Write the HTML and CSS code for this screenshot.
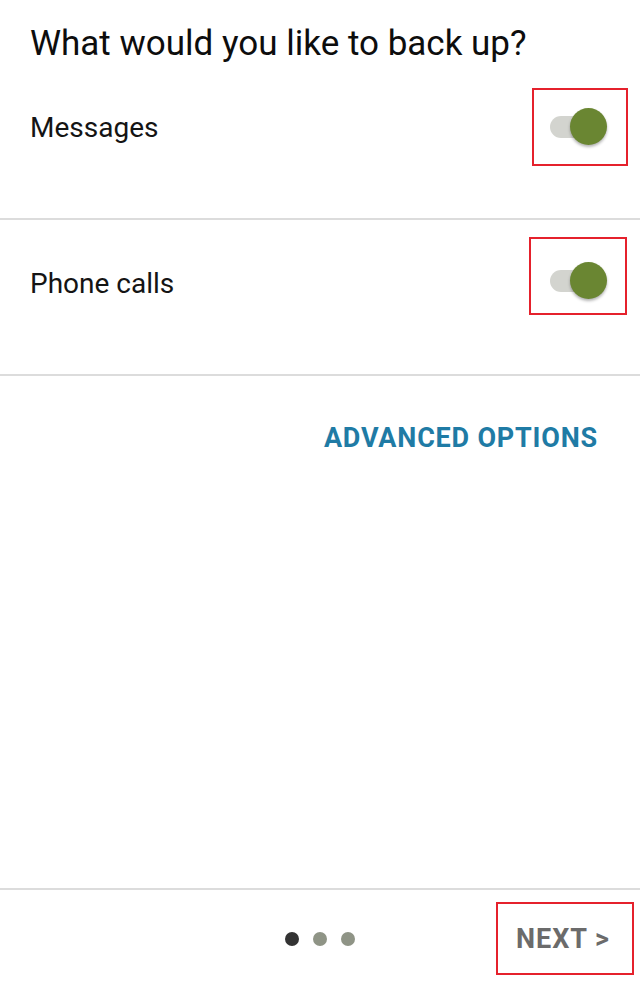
FILE: index.html
```html
<!DOCTYPE html>
<html lang="en">
<head>
<meta charset="utf-8">
<title>Backup</title>
<link rel="stylesheet" href="styles.css">
</head>
<body>
<div class="screen">
  <h1 class="title">What would you like to back up?</h1>
  <div class="row">
    <span class="row-label">Messages</span>
    <div class="annot annot--a">
      <div class="switch"><span class="track"></span><span class="thumb"></span></div>
    </div>
  </div>
  <div class="row">
    <span class="row-label">Phone calls</span>
    <div class="annot annot--b">
      <div class="switch"><span class="track"></span><span class="thumb"></span></div>
    </div>
  </div>
  <div class="advanced">ADVANCED OPTIONS</div>
  <div class="spacer"></div>
  <div class="footer">
    <div class="dots">
      <span class="dot dot--active"></span>
      <span class="dot"></span>
      <span class="dot"></span>
    </div>
    <div class="next-box"><span class="next">NEXT &gt;</span></div>
  </div>
</div>
</body>
</html>
```

FILE: styles.css
```css
html, body {
  margin: 0;
  padding: 0;
  background: #ffffff;
}
body {
  font-family: Roboto, "Liberation Sans", sans-serif;
  color: #111111;
}
.screen {
  width: 640px;
  height: 987px;
  display: flex;
  flex-direction: column;
  overflow: hidden;
}
.title {
  margin: 0;
  padding: 23px 0 0 30px;
  font-size: 35px;
  line-height: 41px;
  font-weight: 400;
  color: #0d0d0d;
}
.row {
  height: 154px;
  flex: none;
  border-bottom: 2px solid #dcdcdc;
  display: flex;
  align-items: flex-start;
  justify-content: space-between;
}
.row-label {
  margin: 47px 0 0 30px;
  font-size: 28px;
  line-height: 33px;
  color: #141414;
}
.annot {
  border: 2px solid #e5212c;
  width: 92px;
  height: 74px;
  display: flex;
  align-items: flex-start;
}
.annot--a {
  margin: 24px 12px 0 0;
}
.annot--a .switch {
  margin: 18px 0 0 16px;
}
.annot--b {
  margin: 17px 13px 0 0;
  width: 94px;
}
.annot--b .switch {
  margin: 23px 0 0 19px;
}
.switch {
  position: relative;
  width: 57px;
  height: 37px;
}
.track {
  position: absolute;
  left: 0;
  top: 8px;
  width: 50px;
  height: 22px;
  border-radius: 11px;
  background: #d3d4cf;
}
.thumb {
  position: absolute;
  right: 0;
  top: 0;
  width: 37px;
  height: 37px;
  border-radius: 50%;
  background: #6a8632;
  box-shadow: 0 2px 3px rgba(0, 0, 0, 0.3);
}
.advanced {
  margin: 47px 42px 0 0;
  text-align: right;
  font-size: 27px;
  line-height: 31px;
  letter-spacing: 0.8px;
  font-weight: 700;
  color: #1f7ba5;
}
.spacer {
  flex: 1;
}
.footer {
  height: 97px;
  flex: none;
  border-top: 2px solid #dcdcdc;
  display: flex;
  align-items: center;
}
.dots {
  margin-left: 285px;
  display: flex;
  gap: 14px;
}
.dot {
  width: 14px;
  height: 14px;
  border-radius: 50%;
  background: #8f9486;
}
.dot--active {
  background: #333333;
}
.next-box {
  margin-left: auto;
  margin-right: 6px;
  width: 134px;
  height: 69px;
  border: 2px solid #e5212c;
  display: flex;
  align-items: center;
  justify-content: center;
}
.next {
  margin-right: 4px;
  font-size: 27px;
  letter-spacing: 1px;
  font-weight: 700;
  color: #6b6b6b;
}
```
